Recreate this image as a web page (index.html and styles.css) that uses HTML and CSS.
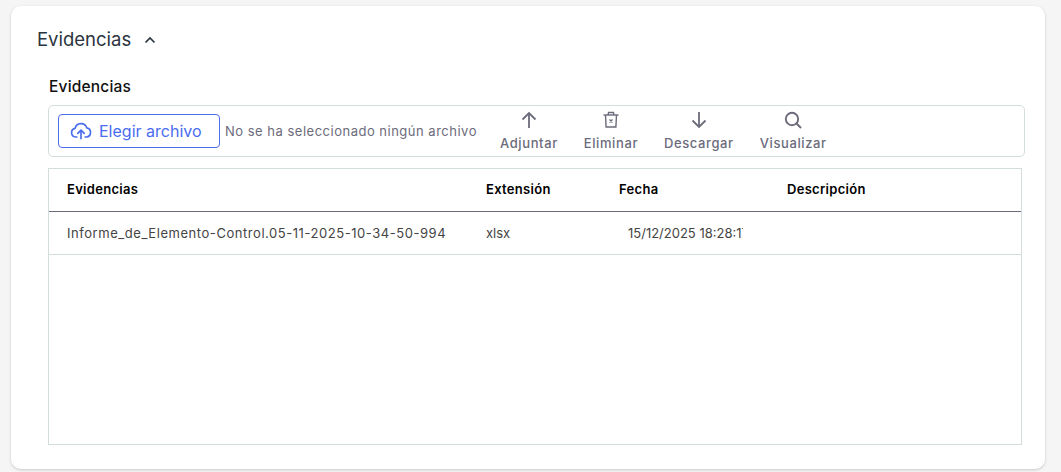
FILE: index.html
```html
<!DOCTYPE html>
<html lang="en">
<head>
  <meta charset="UTF-8">
  <meta name="viewport" content="width=device-width, initial-scale=1.0">
  <title>Evidencias</title>
  <link rel="stylesheet" href="styles.css">
</head>
<body>
  <section class="card">
    <header class="card-head">
      <h2>Evidencias</h2>
      <svg class="chevron" viewBox="0 0 12 8" width="12" height="8"><path d="M1.5 6.5 6 2l4.5 4.5" fill="none" stroke="#2b3440" stroke-width="1.7"/></svg>
    </header>

    <div class="body">
      <h3>Evidencias</h3>

      <div class="toolbar">
        <button class="file-btn">
          <svg viewBox="0 0 24 24" width="22" height="22" fill="none" stroke="#4a6cf0" stroke-width="1.8" stroke-linecap="round" stroke-linejoin="round"><path d="M7.500 18.500H6.200a4.700 4.700 0 0 1-.7-9.300 6.600 6.600 0 0 1 12.800-.6 5 5 0 0 1-.5 9.900h-1.300"/><path d="M12 20.500V11.500"/><path d="m8.500 14.500 3.500-3.500 3.500 3.500"/></svg>
          Elegir archivo
        </button>
        <span class="file-name">No se ha seleccionado ningún archivo</span>

        <div class="actions">
          <a class="action">
            <svg viewBox="0 0 20 20" width="20" height="20" fill="none" stroke="#6b6b7b" stroke-width="1.8"><path d="M10 18V3"/><path d="M3.500 9.500 10 3l6.500 6.500"/></svg>
            Adjuntar
          </a>
          <a class="action">
            <svg viewBox="0 0 20 20" width="20" height="20" fill="none" stroke="#6b6b7b" stroke-width="1.4"><path d="M2.500 5h15"/><path d="M7 5l.6-2.500h4.800L13 5"/><path d="M4.500 5l.6 12h9.800l.6-12"/><path d="m8.500 9.500 3 3m0-3-3 3"/></svg>
            Eliminar
          </a>
          <a class="action">
            <svg viewBox="0 0 20 20" width="20" height="20" fill="none" stroke="#6b6b7b" stroke-width="1.8"><path d="M10 2v15"/><path d="M3.500 10.500 10 17l6.500-6.500"/></svg>
            Descargar
          </a>
          <a class="action">
            <svg viewBox="0 0 20 20" width="20" height="20" fill="none" stroke="#6b6b7b" stroke-width="1.9"><circle cx="9" cy="9" r="6.200"/><path d="m13.500 13.500 4.500 4.500"/></svg>
            Visualizar
          </a>
        </div>
      </div>

      <div class="grid">
        <div class="row row-head">
          <div>Evidencias</div>
          <div>Extensión</div>
          <div>Fecha</div>
          <div>Descripción</div>
        </div>
        <div class="row row-data">
          <div>Informe_de_Elemento-Control.05-11-2025-10-34-50-994</div>
          <div class="ext">xlsx</div>
          <div class="date"><span>15/12/2025 18:28:17</span></div>
          <div></div>
        </div>
      </div>
    </div>
  </section>
</body>
</html>
```

FILE: styles.css
```css
html, body {
  height: 100%;
}
body {
  font-family: 'Inter', sans-serif;
  margin: 0;
  padding: 6px 16px 3px 11px;
  box-sizing: border-box;
  background-color: #f5f5f5;
  color: #333;
  overflow: hidden;
}
.card {
  height: 100%;
  box-sizing: border-box;
  padding: 20px 23px 24px 26px;
  background-color: #ffffff;
  border-radius: 10px;
  box-shadow: 0 1px 3px rgba(0, 0, 0, 0.18);
}
.card-head {
  display: flex;
  align-items: center;
  gap: 13px;
  height: 26px;
}
.card-head h2 {
  margin: 0;
  font-size: 18.500px;
  font-weight: 400;
  color: #2b3440;
}
.chevron {
  margin-top: 1px;
}
.body {
  margin-left: 11px;
}
.body h3 {
  margin: 24px 0 7px 1px;
  height: 22px;
  line-height: 22px;
  font-size: 15.500px;
  font-weight: 500;
  letter-spacing: 0.2px;
  color: #111;
}
.toolbar {
  display: flex;
  align-items: center;
  width: 977px;
  height: 52px;
  box-sizing: border-box;
  padding-left: 9px;
  border: 1px solid #d3dedc;
  border-radius: 5px;
}
.file-btn {
  display: flex;
  align-items: center;
  gap: 7px;
  width: 162px;
  height: 34px;
  padding: 0 0 0 11px;
  border: 1px solid #4a6cf0;
  border-radius: 4px;
  background-color: #fff;
  color: #4a6cf0;
  font-family: inherit;
  font-size: 16px;
  cursor: pointer;
}
.file-name {
  margin-left: 5px;
  width: 252px;
  font-size: 13px;
  letter-spacing: 0.5px;
  white-space: nowrap;
  color: #6b6b7b;
}
.actions {
  display: flex;
  margin-left: 23px;
  gap: 26px;
}
.action {
  display: flex;
  flex-direction: column;
  align-items: center;
  font-size: 13px;
  font-weight: 500;
  letter-spacing: 0.6px;
  line-height: 18px;
  color: #6b6b7b;
  cursor: pointer;
}
.action svg {
  margin: -1px 0 4px;
}
.grid {
  margin-top: 11px;
  width: 974px;
  height: 277px;
  box-sizing: border-box;
  border: 1px solid #d3dedc;
}
.row {
  display: grid;
  grid-template-columns: 419px 133px 168px 1fr;
  align-items: center;
  padding-left: 18px;
  font-size: 13px;
}
.row-head {
  height: 40px;
  padding-bottom: 2px;
  border-bottom: 1px solid #6b6b7b;
  font-weight: 600;
  letter-spacing: 0.3px;
  color: #000;
}
.row-data {
  height: 42px;
  border-bottom: 1px solid #d3dedc;
  letter-spacing: 0.55px;
  color: #444;
}
.ext {
  letter-spacing: 0;
}
.date {
  padding-left: 9px;
  width: 115px;
  overflow: hidden;
  white-space: nowrap;
  letter-spacing: 0;
}
```
